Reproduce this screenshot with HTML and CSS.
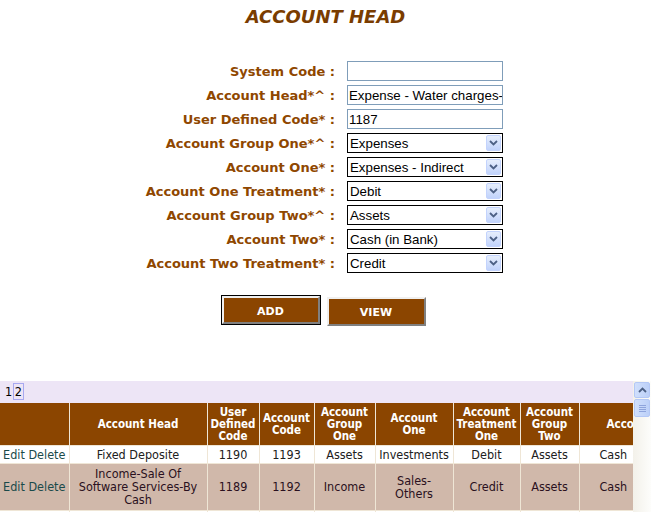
FILE: index.html
```html
<!DOCTYPE html>
<html>
<head>
<meta charset="utf-8">
<link rel="stylesheet" href="styles.css">
</head>
<body>
<h1 class="title">ACCOUNT HEAD</h1>
<div class="form">
  <label class="lbl">System Code :</label><input class="inp" type="text" value="">
  <label class="lbl">Account Head*^ :</label><input class="inp" type="text" value="Expense - Water charges-">
  <label class="lbl">User Defined Code* :</label><input class="inp" type="text" value="1187">
  <label class="lbl">Account Group One*^ :</label><div class="sel"><span>Expenses</span><i class="arr"><svg width="9" height="6" viewBox="0 0 9 6"><path d="M1 1l3.5 3.5L8 1" fill="none" stroke="#4d6185" stroke-width="1.8"/></svg></i></div>
  <label class="lbl">Account One* :</label><div class="sel"><span>Expenses - Indirect</span><i class="arr"><svg width="9" height="6" viewBox="0 0 9 6"><path d="M1 1l3.5 3.5L8 1" fill="none" stroke="#4d6185" stroke-width="1.8"/></svg></i></div>
  <label class="lbl">Account One Treatment* :</label><div class="sel"><span>Debit</span><i class="arr"><svg width="9" height="6" viewBox="0 0 9 6"><path d="M1 1l3.5 3.5L8 1" fill="none" stroke="#4d6185" stroke-width="1.8"/></svg></i></div>
  <label class="lbl">Account Group Two*^ :</label><div class="sel"><span>Assets</span><i class="arr"><svg width="9" height="6" viewBox="0 0 9 6"><path d="M1 1l3.5 3.5L8 1" fill="none" stroke="#4d6185" stroke-width="1.8"/></svg></i></div>
  <label class="lbl">Account Two* :</label><div class="sel"><span>Cash (in Bank)</span><i class="arr"><svg width="9" height="6" viewBox="0 0 9 6"><path d="M1 1l3.5 3.5L8 1" fill="none" stroke="#4d6185" stroke-width="1.8"/></svg></i></div>
  <label class="lbl">Account Two Treatment* :</label><div class="sel"><span>Credit</span><i class="arr"><svg width="9" height="6" viewBox="0 0 9 6"><path d="M1 1l3.5 3.5L8 1" fill="none" stroke="#4d6185" stroke-width="1.8"/></svg></i></div>
</div>
<div class="buttons">
  <button class="btn btn-focus">ADD</button>
  <button class="btn">VIEW</button>
</div>
<div class="gridbox">
  <div class="gridview">
    <div class="pager">1 <span class="cur">2</span></div>
    <table class="grid">
      <colgroup>
        <col style="width:69px"><col style="width:138px"><col style="width:52px"><col style="width:55px"><col style="width:61px"><col style="width:78px"><col style="width:67px"><col style="width:59px"><col style="width:130px">
      </colgroup>
      <tr class="hdr">
        <th></th><th>Account Head</th><th>User<br>Defined<br>Code</th><th>Account<br>Code</th><th>Account<br>Group<br>One</th><th>Account<br>One</th><th>Account<br>Treatment<br>One</th><th>Account<br>Group<br>Two</th><th class="l">Account Two</th>
      </tr>
      <tr class="row">
        <td class="act">Edit Delete</td><td>Fixed Deposite</td><td>1190</td><td>1193</td><td>Assets</td><td>Investments</td><td>Debit</td><td>Assets</td><td class="l">Cash</td>
      </tr>
      <tr class="row alt">
        <td class="act">Edit Delete</td><td>Income-Sale Of<br>Software Services-By<br>Cash</td><td>1189</td><td>1192</td><td>Income</td><td>Sales-<br>Others</td><td>Credit</td><td>Assets</td><td class="l">Cash</td>
      </tr>
      <tr class="row empty">
        <td></td><td></td><td></td><td></td><td></td><td></td><td></td><td></td><td></td>
      </tr>
    </table>
  </div>
  <div class="vscroll">
    <div class="sbtn"><svg width="9" height="6" viewBox="0 0 9 6"><path d="M1 5l3.5-3.5L8 5" fill="none" stroke="#4d6185" stroke-width="1.8"/></svg></div>
    <div class="thumb"><i></i><i></i><i></i><i></i></div>
  </div>
</div>
</body>
</html>
```
FILE: styles.css
```css
html, body { margin: 0; padding: 0; background: #fff; }
body { width: 651px; height: 512px; overflow: hidden; font-family: "DejaVu Sans", Verdana, sans-serif; }

.title {
  margin: 0;
  padding-top: 7px;
  height: 54px;
  box-sizing: border-box;
  text-align: center;
  font-size: 18px;
  font-weight: bold;
  font-style: italic;
  color: #7a3c00;
  line-height: 20px;
}

.form {
  display: grid;
  grid-template-columns: 335px 156px;
  grid-auto-rows: 20px;
  column-gap: 12px;
  row-gap: 4px;
  margin-top: 7px;
}
.lbl {
  text-align: right;
  font-size: 13px;
  font-weight: bold;
  color: #8f4700;
  line-height: 21px;
  height: 20px;
  white-space: nowrap;
}
.inp {
  box-sizing: border-box;
  width: 156px;
  height: 20px;
  margin: 0;
  padding: 0 0 0 1px;
  border: 1px solid #7f9db9;
  font-family: "Liberation Sans", Arial, sans-serif;
  font-size: 13.3px;
  color: #000;
  outline: none;
}
.sel {
  box-sizing: border-box;
  width: 156px;
  height: 20px;
  border: 1px solid #000;
  display: flex;
  align-items: center;
  justify-content: space-between;
  padding-left: 2px;
  font-family: "Liberation Sans", Arial, sans-serif;
  font-size: 13.3px;
  color: #000;
}
.arr {
  width: 15px;
  height: 16px;
  margin-right: 1px;
  box-sizing: border-box;
  border: 1px solid #c3d3fd;
  background: linear-gradient(#e6eefc, #c1d3fb);
  border-radius: 2px;
  display: flex;
  align-items: center;
  justify-content: center;
}

.buttons {
  display: flex;
  justify-content: center;
  gap: 7px;
  margin-top: 24px;
  padding-right: 4px;
}
.btn {
  width: 99px;
  height: 29px;
  margin: 0;
  box-sizing: border-box;
  background: #8b4500;
  color: #fff;
  font-family: "DejaVu Sans", Verdana, sans-serif;
  font-weight: bold;
  font-size: 11px;
  border: 2px solid;
  border-color: #f0f0f0 #808080 #808080 #f0f0f0;
  padding: 2px 0 0 0;
}
.btn-focus {
  outline: 1px solid #000;
  width: 98px;
  height: 28px;
  margin-top: -1px;
}

.gridbox {
  display: flex;
  margin-top: 55px;
  height: 131px;
}
.gridview {
  width: 633px;
  overflow: hidden;
  flex: none;
}
.pager {
  background: #ede5f6;
  height: 22px;
  box-sizing: border-box;
  padding: 3px 0 0 5px;
  font-size: 12.5px;
  color: #000;
  font-family: "DejaVu Sans Condensed", "DejaVu Sans", sans-serif;
}
.pager .cur {
  border: 1px solid #a8a8f0;
  padding: 0 1px;
  margin-left: -3px;
}
.grid {
  border-collapse: collapse;
  table-layout: fixed;
  width: 709px;
  font-family: "DejaVu Sans Condensed", "DejaVu Sans", sans-serif;
}
.grid th, .grid td {
  border: 1px solid #efe6d6;
  padding: 0 1px;
  text-align: center;
  overflow: hidden;
  white-space: nowrap;
}
.grid tr:first-child th { border-top: 0; }
.grid tr th:first-child, .grid tr td:first-child { border-left: 0; }
.hdr th {
  background: #8b4500;
  color: #fff;
  font-size: 11.5px;
  font-weight: bold;
  line-height: 12px;
  height: 42px;
  box-sizing: border-box;
}
.row td {
  font-size: 12.5px;
  line-height: 13px;
  color: #202020;
  height: 18px;
  box-sizing: border-box;
  background: #fff;
}
.row.alt td { background: #d0b8aa; height: 47px; color: #2a1020; }
.row td.act { color: #1a4a4a; }
.grid .hdr th.l { text-align: left; padding-left: 27px; }
.grid .row td.l { text-align: left; padding-left: 20px; }

.vscroll {
  width: 18px;
  flex: none;
  background: linear-gradient(90deg, #f3f1ea, #fdfdfb);
  display: flex;
  flex-direction: column;
  align-items: center;
  gap: 1px;
  padding-top: 1px;
}
.sbtn, .thumb {
  width: 16px;
  box-sizing: border-box;
  border: 1px solid #b4c8f6;
  border-radius: 2px;
  background: linear-gradient(90deg, #d0dffc, #bcd0f8);
  display: flex;
  align-items: center;
  justify-content: center;
}
.sbtn { height: 16px; }
.thumb {
  height: 18px;
  flex-direction: column;
  gap: 1px;
}
.thumb i {
  display: block;
  width: 7px;
  height: 1px;
  background: #8ea4dc;
}
```
